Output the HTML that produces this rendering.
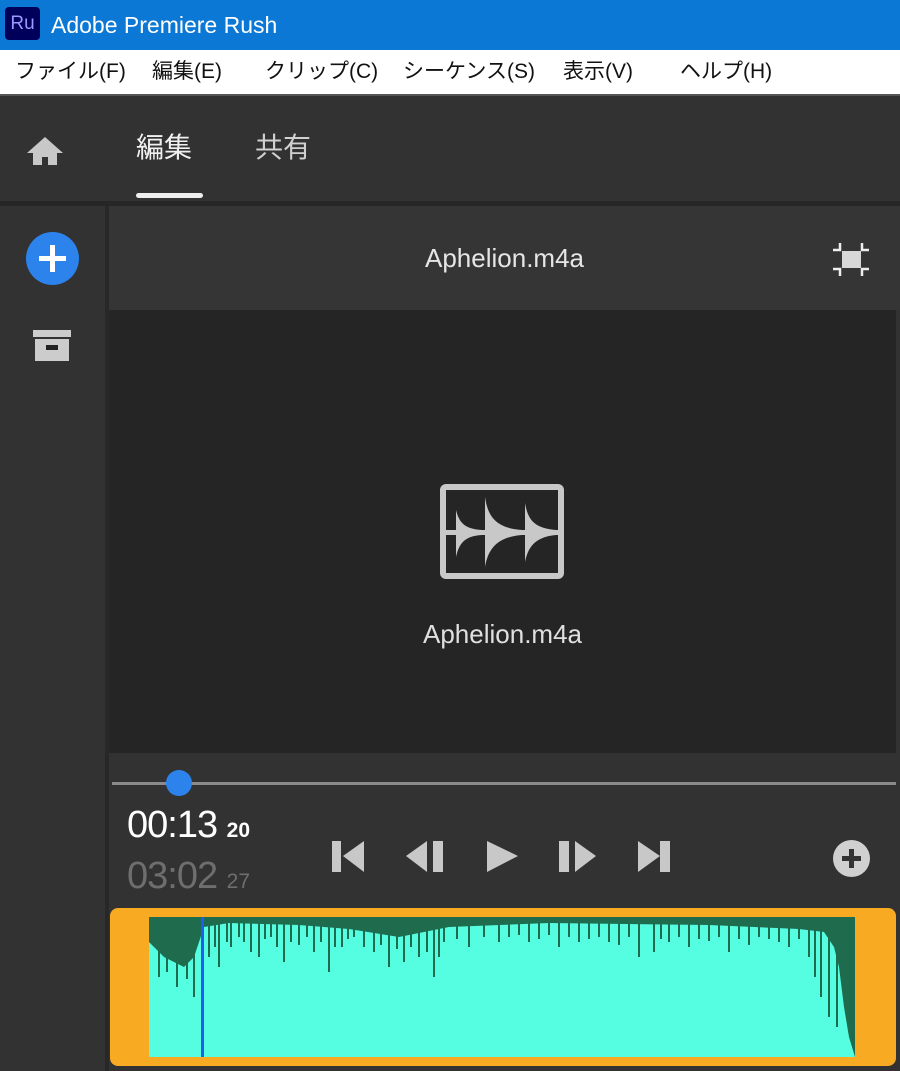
<!DOCTYPE html>
<html><head><meta charset="utf-8"><style>
*{margin:0;padding:0;box-sizing:border-box}
body{width:900px;height:1071px;overflow:hidden;background:#323232;font-family:"Liberation Sans","Noto Sans CJK JP",sans-serif;position:relative}
.abs{position:absolute}
.m{position:absolute;top:57px;font-size:21px;line-height:30px;color:#111;white-space:nowrap}
</style></head><body>
<div class="abs" style="left:0;top:0;width:900px;height:50px;background:#0a78d4"></div>
<div class="abs" style="left:5px;top:7px;width:35px;height:33px;background:#00005b;border-radius:4px;color:#9999ff;font-size:19px;line-height:33px;text-align:center">Ru</div>
<div class="abs" style="left:51px;top:10px;color:#fff;font-size:23px;line-height:30px">Adobe Premiere Rush</div>
<div class="abs" style="left:0;top:50px;width:900px;height:44px;background:#fff"></div>
<div class="m" style="left:15px">ファイル(F)</div>
<div class="m" style="left:152px">編集(E)</div>
<div class="m" style="left:265px">クリップ(C)</div>
<div class="m" style="left:403px">シーケンス(S)</div>
<div class="m" style="left:563px">表示(V)</div>
<div class="m" style="left:680px">ヘルプ(H)</div>
<div class="abs" style="left:0;top:94px;width:900px;height:2px;background:#555"></div>
<svg class="abs" style="left:24px;top:133px" width="42" height="36" viewBox="0 0 42 36"><path d="M21 4 L3 20 H9 V32 H18 V24 H24 V32 H33 V20 H39 Z" fill="#c8c8c8"/></svg>
<div class="abs" style="left:136px;top:130px;font-size:28px;color:#f0f0f0;line-height:36px">編集</div>
<div class="abs" style="left:136px;top:193px;width:67px;height:5px;background:#eee;border-radius:3px"></div>
<div class="abs" style="left:255px;top:130px;font-size:28px;color:#d0d0d0;line-height:36px">共有</div>
<div class="abs" style="left:0;top:201px;width:900px;height:5px;background:#262626"></div>
<div class="abs" style="left:105px;top:206px;width:4px;height:865px;background:#282828"></div>
<div class="abs" style="left:26px;top:232px;width:53px;height:53px;border-radius:50%;background:#2d83ec"></div>
<div class="abs" style="left:39px;top:256px;width:27px;height:5px;background:#fff"></div>
<div class="abs" style="left:50px;top:245px;width:5px;height:27px;background:#fff"></div>
<svg class="abs" style="left:30px;top:328px" width="44" height="36"><rect x="3" y="2" width="38" height="7" fill="#ccc"/><rect x="5" y="11" width="34" height="22" fill="#ccc"/><rect x="16" y="17" width="12" height="5" fill="#222"/></svg>
<div class="abs" style="left:109px;top:206px;width:791px;height:104px;background:#353535"></div>
<div class="abs" style="left:109px;top:240px;width:791px;text-align:center;font-size:26px;line-height:36px;color:#e6e6e6">Aphelion.m4a</div>
<svg class="abs" style="left:830px;top:240px" width="42" height="38"><rect x="12" y="11" width="19" height="17" fill="#d8d8d8"/><path d="M3 10H10V3 M32 3V10H39 M3 29H10V36 M32 36V29H39" stroke="#eee" stroke-width="2.5" fill="none"/></svg>
<div class="abs" style="left:109px;top:310px;width:787px;height:443px;background:#252525"></div>
<svg class="abs" style="left:438px;top:482px" width="128" height="100" viewBox="0 0 128 100"><rect x="5" y="5" width="118" height="89" rx="3" fill="none" stroke="#c8c8c8" stroke-width="6"/><rect x="8" y="48" width="112" height="5" fill="#c8c8c8"/>
<path d="M18 28 C21 40 26 47 44 48 V53 C26 54 21 62 18 75 Z" fill="#c8c8c8"/>
<path d="M47 15 C50 35 58 46 84 48 V53 C58 55 50 68 47 85 Z" fill="#c8c8c8"/>
<path d="M87 21 C90 38 96 46 118 48 V53 C96 55 90 66 87 80 Z" fill="#c8c8c8"/></svg>
<div class="abs" style="left:109px;top:616px;width:787px;text-align:center;font-size:26px;line-height:36px;color:#e0e0e0">Aphelion.m4a</div>
<div class="abs" style="left:112px;top:782px;width:784px;height:3px;background:#8a8a8a"></div>
<div class="abs" style="left:166px;top:770px;width:26px;height:26px;border-radius:50%;background:#2d83ec"></div>
<div class="abs" style="left:127px;top:804px;font-size:38px;color:#fff;line-height:42px;letter-spacing:-1px">00:13 <span style="font-size:21px;font-weight:bold;letter-spacing:0">20</span></div>
<div class="abs" style="left:127px;top:855px;font-size:38px;color:#6e6e6e;line-height:42px;letter-spacing:-1px">03:02 <span style="font-size:21px;letter-spacing:0">27</span></div>
<svg class="abs" style="left:320px;top:835px" width="360" height="45" viewBox="320 835 360 45"><g fill="#c8c8c8"><rect x="332" y="841" width="9" height="31"/><path d="M364 841 V872 L343 856Z"/><path d="M406 856 L427 841 V872Z"/><rect x="433" y="841" width="10" height="31"/><path d="M487 841 L518 856 L487 872Z"/><rect x="559" y="841" width="10" height="31"/><path d="M575 841 L596 856 L575 872Z"/><path d="M638 841 L660 856 L638 872Z"/><rect x="660" y="841" width="10" height="31"/></g></svg>
<div class="abs" style="left:833px;top:840px;width:37px;height:37px;border-radius:50%;background:#d0d0d0"></div>
<div class="abs" style="left:842px;top:856px;width:19px;height:5px;background:#333"></div>
<div class="abs" style="left:849px;top:849px;width:5px;height:19px;background:#333"></div>
<div class="abs" style="left:110px;top:908px;width:786px;height:158px;background:#f8ab22;border-radius:8px"></div>
<svg class="abs" style="left:149px;top:917px" width="706" height="140" viewBox="0 0 706 140">
<rect width="706" height="140" fill="#55fde1"/>
<path d="M0 0 H706 V140 L700 120 L695 90 L690 50 L685 30 L675 15 L650 12 L560 8 L400 6 L300 10 L250 20 L200 12 L150 8 L80 6 L55 10 L45 40 L35 50 L25 45 L15 40 L5 30 L0 25Z" fill="#1f6b4e"/>
<g stroke="#1f6b4e" stroke-width="2"><path d="M10 0V60 M18 0V55 M28 0V70 M38 0V62 M45 0V80 M60 0V40 M66 0V30 M70 0V50 M78 0V25 M82 0V30 M90 0V20 M95 0V25 M102 0V35 M110 0V40 M116 0V22 M122 0V20 M128 0V30 M135 0V45 M142 0V25 M150 0V28 M158 0V20 M165 0V35 M172 0V25 M180 0V55 M186 0V30 M193 0V30 M199 0V22 M205 0V20 M215 0V30 M225 0V35 M232 0V28 M240 0V50 M248 0V32 M255 0V45 M262 0V30 M270 0V40 M278 0V35 M285 0V60 M290 0V40 M295 0V25 M308 0V22 M320 0V30 M335 0V20 M350 0V25 M360 0V20 M370 0V18 M380 0V25 M390 0V22 M400 0V18 M410 0V30 M420 0V20 M430 0V25 M440 0V22 M450 0V20 M460 0V25 M470 0V28 M480 0V20 M490 0V40 M505 0V35 M512 0V22 M520 0V25 M530 0V20 M540 0V30 M550 0V22 M560 0V24 M570 0V20 M580 0V35 M590 0V22 M600 0V28 M610 0V20 M620 0V22 M630 0V25 M640 0V30 M650 0V22 M660 0V40 M666 0V60 M672 0V80 M680 0V100 M688 0V110"/></g>
<rect x="52" y="0" width="3" height="140" fill="#1a5ff0"/>
</svg>
</body></html>
